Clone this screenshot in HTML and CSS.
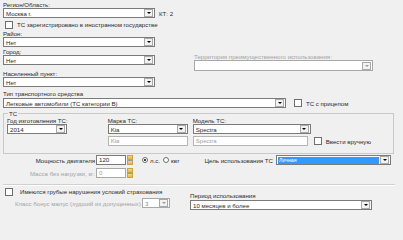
FILE: index.html
```html
<!DOCTYPE html>
<html lang="ru">
<head>
<meta charset="utf-8">
<link rel="stylesheet" href="styles.css">
</head>
<body>
<div class="page">
  <div class="lbl">Регион/Область:</div>
  <div class="row">
    <div class="combo w152"><span>Москва г.</span><span class="btn"></span></div>
    <span class="kt">КТ: 2</span>
  </div>
  <div class="row chk-row">
    <span class="chk"></span><span class="chk-text">ТС зарегистрировано в иностранном государстве</span>
  </div>
  <div class="lbl">Район:</div>
  <div class="combo w152"><span>Нет</span><span class="btn"></span></div>
  <div class="row block-city">
    <div class="col">
      <div class="lbl">Город:</div>
      <div class="combo w152"><span>Нет</span><span class="btn"></span></div>
      <div class="lbl mt5">Населенный пункт:</div>
      <div class="combo w152"><span>Нет</span><span class="btn"></span></div>
    </div>
    <div class="col terr">
      <div class="lbl dis">Территория преимущественного использования:</div>
      <div class="combo combo-dis w179 h11"><span></span><span class="btn btn-dis"></span></div>
    </div>
  </div>
  <div class="lbl mt3">Тип транспортного средства</div>
  <div class="row mt1">
    <div class="combo w283"><span>Легковые автомобили (ТС категории B)</span><span class="btn"></span></div>
    <span class="chk ml8"></span><span class="chk-text">ТС с прицепом</span>
  </div>
  <fieldset class="group">
    <legend>ТС</legend>
    <div class="grow">
      <div class="col c1">
        <div class="lbl">Год изготовления ТС:</div>
        <div class="combo w60"><span>2014</span><span class="btn"></span></div>
      </div>
      <div class="col c2">
        <div class="lbl">Марка ТС:</div>
        <div class="combo w80"><span>Kia</span><span class="btn"></span></div>
        <div class="tbox tbox-dis w80 mt2">Kia</div>
      </div>
      <div class="col c3">
        <div class="lbl">Модель ТС:</div>
        <div class="combo w118"><span>Spectra</span><span class="btn"></span></div>
        <div class="row mt2">
          <div class="tbox tbox-dis w115">Spectra</div>
          <span class="chk ml6"></span><span class="chk-text">Ввести вручную</span>
        </div>
      </div>
    </div>
  </fieldset>
  <div class="row prow">
    <div class="rlbl">Мощность двигателя</div>
    <div class="tbox w30">120</div>
    <div class="spin"><span></span><span></span></div>
    <div class="radios">
      <span class="radio on"></span><span class="rtext">л.с.</span>
      <span class="radio"></span><span class="rtext">квт</span>
    </div>
    <div class="rlbl2">Цель использования ТС</div>
    <div class="combo combo-sel w115"><span class="sel">Личная</span><span class="btn"></span></div>
  </div>
  <div class="row mrow">
    <div class="rlbl dis">Масса без нагрузки, кг:</div>
    <div class="tbox tbox-dis2 w30">0</div>
    <div class="spin"><span></span><span></span></div>
  </div>
  <div class="sep"></div>
  <div class="row bottom">
    <div class="col bl">
      <div class="row chk-row2">
        <span class="chk"></span><span class="chk-text t2">Имеются грубые нарушения условий страхования</span>
      </div>
      <div class="row krow">
        <span class="klbl dis">Класс бонус малус (худший из допущенных)</span>
        <div class="combo combo-dis2 w28"><span>3</span><span class="btn btn-dis"></span></div>
      </div>
    </div>
    <div class="col br">
      <div class="lbl">Период использования</div>
      <div class="combo w182 mt1"><span>10 месяцев и более</span><span class="btn"></span></div>
    </div>
  </div>
</div>
</body>
</html>
```
FILE: styles.css
```css
html, body { margin: 0; padding: 0; }
body {
  width: 403px;
  height: 215px;
  overflow: hidden;
  background: #f0f0f0;
  font-family: "Liberation Sans", Arial, sans-serif;
  font-size: 6.1px;
  color: #2a2a2a;
}
.page { padding: 1px 0 0 3px; display: flex; flex-direction: column; }
.row { display: flex; align-items: center; }
.col { display: flex; flex-direction: column; }
.lbl { height: 7px; line-height: 7px; white-space: nowrap; }
.dis { color: #a3a3a3; }
.mt1 { margin-top: 1px; }
.mt2 { margin-top: 2px; }
.mt3 { margin-top: 3px; }
.mt5 { margin-top: 5px; }
.ml6 { margin-left: 6px; }
.ml8 { margin-left: 8px; }

.combo {
  height: 10px;
  box-sizing: border-box;
  border: 1px solid #7a7a7a;
  background: #fff;
  display: flex;
  align-items: center;
  justify-content: space-between;
  padding-left: 2px;
  white-space: nowrap;
}
.h11 { height: 11px; }
.combo .btn {
  width: 9px;
  height: 8px;
  box-sizing: border-box;
  border: 1px solid #a9a9a9;
  background: #f2f2f2;
  margin-right: 1px;
  display: flex;
  align-items: center;
  justify-content: center;
  flex: none;
}
.combo .btn::after {
  content: "";
  border-left: 2px solid transparent;
  border-right: 2px solid transparent;
  border-top: 2px solid #000;
}
.combo .btn-dis::after { border-top-color: #9a9a9a; }
.combo-dis { border-color: #a8a8a8; }
.combo-dis2 { border-color: #a8a8a8; color: #8a8a8a; }
.combo-sel { padding-left: 1px; }
.combo-sel .sel {
  flex: 1;
  height: 7px;
  line-height: 7px;
  background: #3399ff;
  color: #fff;
  padding-left: 1px;
  margin-right: 1px;
  font-size: 5.2px;
}
.w28 { width: 28px; }
.w30 { width: 30px; }
.w60 { width: 60px; }
.w80 { width: 80px; }
.w115 { width: 115px; }
.w118 { width: 118px; }
.w152 { width: 152px; }
.w179 { width: 179px; }
.w182 { width: 182px; }
.w283 { width: 283px; }

.kt { margin-left: 4px; }
.chk {
  width: 8px;
  height: 8px;
  box-sizing: border-box;
  border: 1px solid #6f6f6f;
  background: #fff;
  flex: none;
}
.chk-row { height: 11px; margin-top: 1px; padding-left: 2px; }
.chk-text { margin-left: 4px; white-space: nowrap; }

.block-city { align-items: flex-start; margin-top: 1px; }
.terr { margin-left: 39px; margin-top: 5px; }

.tbox {
  height: 10px;
  box-sizing: border-box;
  border: 1px solid #7a7a7a;
  background: #fff;
  padding-left: 2px;
  line-height: 8px;
  white-space: nowrap;
}
.tbox-dis { border-color: #b4b4b4; color: #a0a0a0; }
.tbox-dis2 { border-color: #a8a8a8; color: #a0a0a0; }

.group {
  margin: 2px 0 0 0;
  width: 391px;
  box-sizing: border-box;
  border: 1px solid #c9c9c9;
  padding: 0 3px 7px 3px;
  min-width: 0;
}
.group legend {
  padding: 0 1px;
  margin-left: 1px;
  height: 7px;
  line-height: 7px;
}
.grow { display: flex; align-items: flex-start; }
.c2 { margin-left: 40px; }
.c3 { margin-left: 5px; }

.prow { margin-top: 1px; height: 10px; }
.rlbl { width: 93px; text-align: right; padding-right: 1px; box-sizing: border-box; white-space: nowrap; }
.spin {
  width: 6px;
  height: 10px;
  margin-left: 1px;
  display: flex;
  flex-direction: column;
  box-sizing: border-box;
}
.spin span {
  flex: 1;
  background: linear-gradient(#f4d98a, #e3b54a);
  border: 1px solid #c9a24a;
}
.spin span + span { border-top-color: #9a9a9a; }
.radios { margin-left: 9px; width: 47px; display: flex; align-items: center; }
.radio {
  width: 6px;
  height: 6px;
  box-sizing: border-box;
  border: 1px solid #6f6f6f;
  border-radius: 50%;
  background: #fff;
  flex: none;
  display: flex;
  align-items: center;
  justify-content: center;
}
.radio.on::after {
  content: "";
  width: 2px;
  height: 2px;
  border-radius: 50%;
  background: #000;
}
.rtext { margin-left: 2px; margin-right: 3px; }
.rlbl2 { width: 84px; text-align: right; white-space: nowrap; margin-right: 3px; }

.mrow { margin-top: 3px; height: 10px; }
.sep {
  margin-top: 6px;
  width: 392px;
  height: 0;
  border-top: 1px solid #d0d0d0;
  border-bottom: 1px solid #fff;
}
.bottom { align-items: flex-start; }
.bl { width: 187px; }
.chk-row2 { margin-top: 1px; height: 9px; padding-left: 2px; }
.t2 { margin-left: 7px; }
.krow { margin-top: 2px; height: 10px; padding-left: 12px; }
.klbl { white-space: nowrap; width: 127px; }
.br { margin-top: 6px; }
```
